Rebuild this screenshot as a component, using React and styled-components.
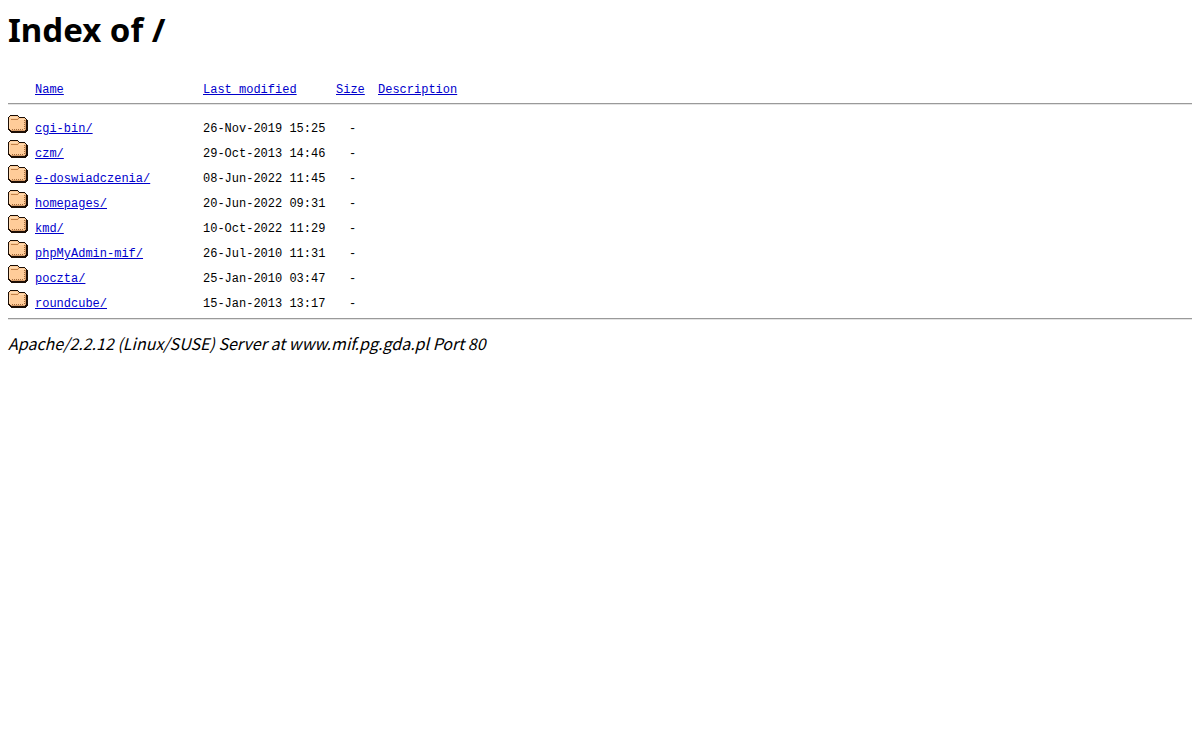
import React from "react";
import styled, { createGlobalStyle } from "styled-components";

const folders = [
  { name: "cgi-bin/", modified: "26-Nov-2019 15:25" },
  { name: "czm/", modified: "29-Oct-2013 14:46" },
  { name: "e-doswiadczenia/", modified: "08-Jun-2022 11:45" },
  { name: "homepages/", modified: "20-Jun-2022 09:31" },
  { name: "kmd/", modified: "10-Oct-2022 11:29" },
  { name: "phpMyAdmin-mif/", modified: "26-Jul-2010 11:31" },
  { name: "poczta/", modified: "25-Jan-2010 03:47" },
  { name: "roundcube/", modified: "15-Jan-2013 13:17" },
];

const FolderIcon = () => (
  <Icon viewBox="0 0 20 22" role="img" aria-label="[DIR]">
    <path
      d="M2 2h8v1h1v1h6v1h1v1h1v1h1v11h-1v1h-1v1H3v-1H2v-1H1v-1H0V4h1V3h1z"
      fill="#1c0e06"
    />
    <path d="M2 3h8v1h1v1h6v1h1v11h-1v1H3v-1H2v-1H1V4h1z" fill="#ffcc99" />
    <path d="M3 6h7v1H3zM10 5h1v1h-1z" fill="#c08048" />
    <path d="M2 4h7v1H2zM11 6h5v1h-5zM1 7h1v8H1z" fill="#ffdcb4" />
    <path
      d="M4 16h1v1H4zM6 16h1v1H6zM8 16h1v1H8zM10 16h1v1h-1zM12 16h1v1h-1zM14 16h1v1h-1zM16 15h1v1h-1zM16 13h1v1h-1zM16 11h1v1h-1zM16 9h1v1h-1zM16 7h1v1h-1z"
      fill="#a06a3c"
    />
    <path d="M3 17h14v1H3zM17 7h1v10h-1z" fill="#d89c68" />
  </Icon>
);

const App = () => {
  return (
    <>
      <GlobalStyle />
      <Title>Index of /</Title>
      <Listing>
        <colgroup>
          <Column $width={27} />
          <Column $width={168} />
          <Column $width={133} />
          <Column $width={42} />
          <col />
        </colgroup>
        <thead>
          <tr>
            <HeadCell as="td" />
            <HeadCell scope="col">
              <Link href="?C=N;O=D">Name</Link>
            </HeadCell>
            <HeadCell scope="col">
              <Link href="?C=M;O=A">Last modified</Link>
            </HeadCell>
            <HeadCell scope="col">
              <Link href="?C=S;O=A">Size</Link>
            </HeadCell>
            <HeadCell scope="col">
              <Link href="?C=D;O=A">Description</Link>
            </HeadCell>
          </tr>
        </thead>
        <tbody>
          {folders.map(({ name, modified }) => (
            <tr key={name}>
              <IconCell>
                <FolderIcon />
              </IconCell>
              <Cell>
                <Link href={name}>{name}</Link>
              </Cell>
              <Cell>{modified}</Cell>
              <SizeCell>-</SizeCell>
              <Cell />
            </tr>
          ))}
        </tbody>
      </Listing>
      <Address>
        Apache/2.2.12 (Linux/SUSE) Server at www.mif.pg.gda.pl Port 80
      </Address>
    </>
  );
};

const GlobalStyle = createGlobalStyle`
  body {
    margin: 8px;
    background-color: #fff;
    color: #000;
    font-family: "Noto Sans", "Open Sans", sans-serif;
    font-size: 16px;
  }
`;

const Title = styled.h1`
  margin: 0 0 29px;
  font-size: 33px;
  line-height: 44px;
  font-weight: bold;
`;

const Listing = styled.table`
  width: 100%;
  padding-bottom: 5px;
  table-layout: fixed;
  border-collapse: separate;
  border-spacing: 0;
  border-bottom: 1px solid #9a9a9a;
  box-shadow: 0 1px #e4e4e4;
  font-family: "Liberation Mono", monospace;
  font-size: 12px;
  line-height: 18px;

  tbody::before {
    content: "";
    display: table-row;
    height: 9px;
  }
`;

const Column = styled.col`
  width: ${({ $width }) => $width}px;
`;

const HeadCell = styled.th`
  height: 22px;
  padding: 0;
  border-bottom: 1px solid #9a9a9a;
  box-shadow: 0 1px #e4e4e4;
  font-weight: normal;
  text-align: left;
  vertical-align: top;
  white-space: nowrap;
`;

const Cell = styled.td`
  height: 25px;
  padding: 0;
  vertical-align: bottom;
  white-space: nowrap;
`;

const IconCell = styled(Cell)`
  vertical-align: top;
`;

const SizeCell = styled(Cell)`
  padding-left: 13px;
`;

const Icon = styled.svg`
  display: block;
  width: 20px;
  height: 22px;
  shape-rendering: crispEdges;
`;

const Link = styled.a`
  color: #0000cc;
  text-decoration: underline;
`;

const Address = styled.address`
  margin-top: 12px;
  font-family: "Noto Sans CJK SC", "Noto Sans", sans-serif;
  font-size: 16px;
  line-height: 24px;
  font-style: italic;
`;

export default App;
